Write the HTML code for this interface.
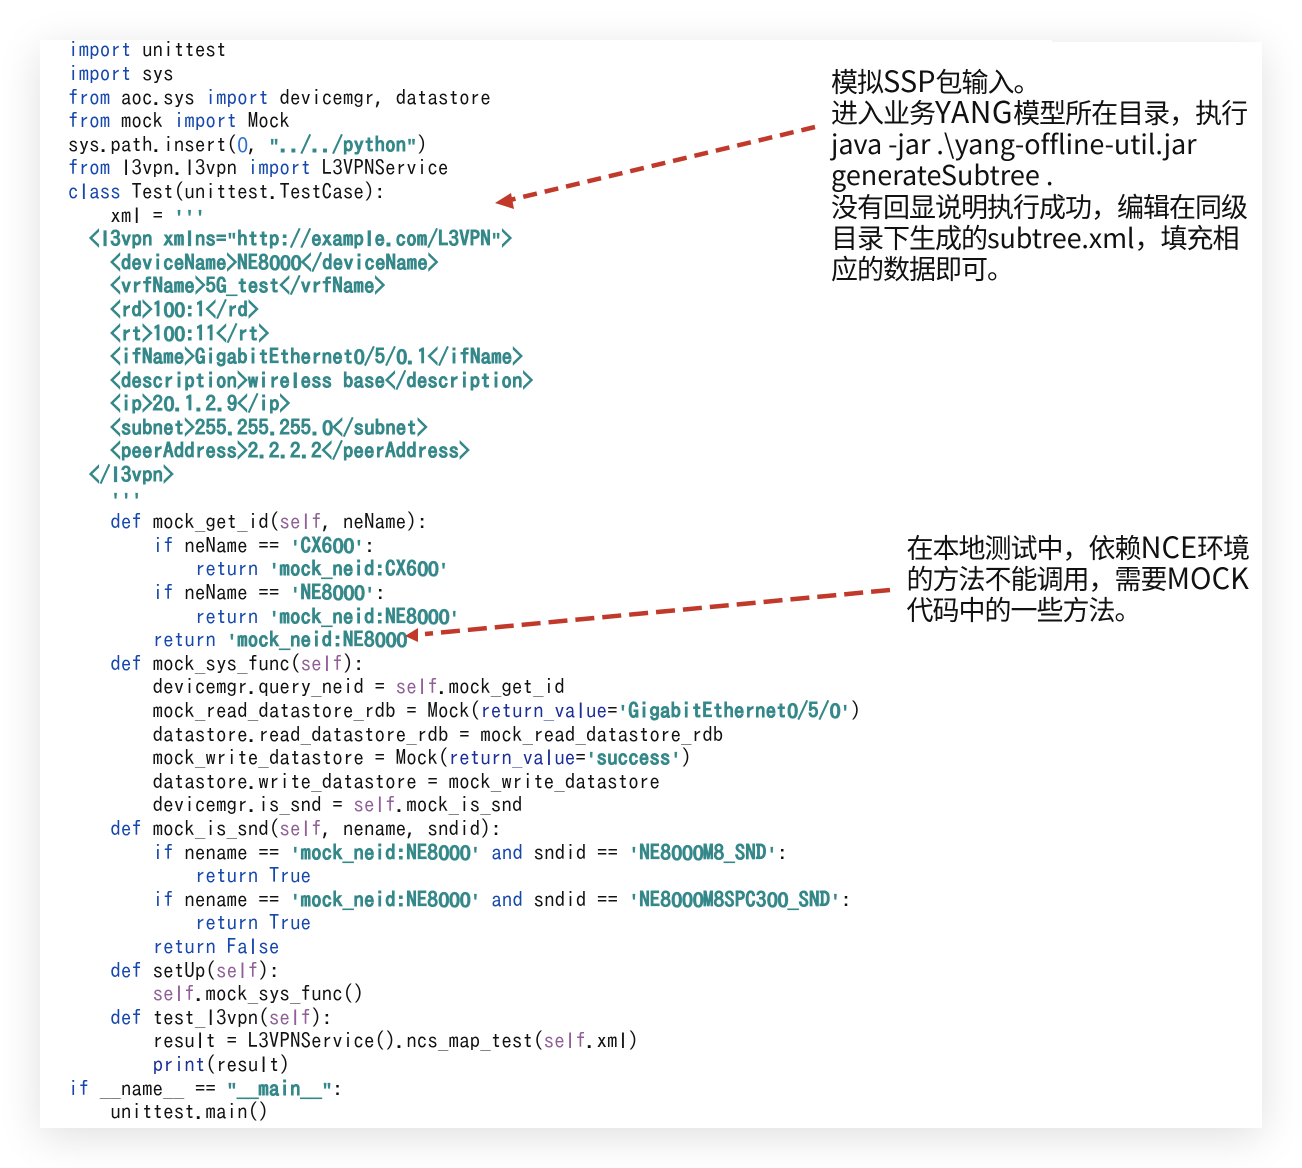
<!DOCTYPE html>
<html><head><meta charset="utf-8"><style>
html,body{margin:0;padding:0;background:#fff}
#p{position:relative;width:1302px;height:1168px;overflow:hidden;background:#fff}
#c{position:absolute;left:40px;top:42px;width:1222px;height:1086px;background:#fff;box-shadow:0 8px 40px rgba(0,0,0,.13)}
#c2{position:absolute;left:40px;top:40px;width:1012px;height:10px;background:#fff}
pre{position:absolute;left:68px;top:38.4px;margin:0;font:21px/23.6px "IPAGothic","Liberation Mono",monospace;color:#111;letter-spacing:.07px;white-space:pre}
pre i{font-style:normal;font-family:"Noto Sans CJK SC",sans-serif;font-size:20px;line-height:0;letter-spacing:-.53px}
.s i{letter-spacing:-1.1px}
pre b{font-weight:inherit;font-family:"Liberation Sans",sans-serif;font-size:21px;line-height:0;letter-spacing:0;padding:0 2.95px}
.s b{padding:0 2.37px}
pre u{text-decoration:none;font-family:"Liberation Mono",monospace;font-size:17.6px;line-height:0;letter-spacing:0}
.k{color:#1547ad}.p{color:#1a2f9a}.s{color:#35888a;font-weight:bold;-webkit-text-stroke:.3px #35888a}.f{color:#8f5f96}.n{color:#2a6fd0}
.t{position:absolute;font:27px/31px "Noto Sans CJK SC","Liberation Sans",sans-serif;color:#111;white-space:nowrap;letter-spacing:-1px}
.t span{line-height:0;font-size:29px;letter-spacing:0}
svg{position:absolute;left:0;top:0}
</style></head><body><div id="p"><div id="c"></div><div id="c2"></div>
<pre><span class="k">import</span> unittest
<span class="k">import</span> sys
<span class="k">from</span> aoc.sys <span class="k">import</span> devicemgr, datastore
<span class="k">from</span> mock <span class="k">import</span> Mock
sys.path.insert(<span class="n"><i>0</i></span>, <span class="s"><u>"</u>../../python<u>"</u></span>)
<span class="k">from</span> <b>l</b>3vpn.<b>l</b>3vpn <span class="k">import</span> L3VPNService
<span class="k">c<b>l</b>ass</span> Test(unittest.TestCase):
    xm<b>l</b> = <span class="s"><u>'''</u></span>
  <span class="s">&lt;<b>l</b>3vpn xm<b>l</b>ns=<u>"</u>http://examp<b>l</b>e.com/L3VPN<u>"</u>&gt;</span>
    <span class="s">&lt;deviceName&gt;NE8<i>000</i>&lt;/deviceName&gt;</span>
    <span class="s">&lt;vrfName&gt;5G_test&lt;/vrfName&gt;</span>
    <span class="s">&lt;rd&gt;1<i>00</i>:1&lt;/rd&gt;</span>
    <span class="s">&lt;rt&gt;1<i>00</i>:11&lt;/rt&gt;</span>
    <span class="s">&lt;ifName&gt;GigabitEthernet<i>0</i>/5/<i>0</i>.1&lt;/ifName&gt;</span>
    <span class="s">&lt;description&gt;wire<b>l</b>ess base&lt;/description&gt;</span>
    <span class="s">&lt;ip&gt;2<i>0</i>.1.2.9&lt;/ip&gt;</span>
    <span class="s">&lt;subnet&gt;255.255.255.<i>0</i>&lt;/subnet&gt;</span>
    <span class="s">&lt;peerAddress&gt;2.2.2.2&lt;/peerAddress&gt;</span>
  <span class="s">&lt;/<b>l</b>3vpn&gt;</span>
    <span class="s"><u>'''</u></span>
    <span class="k">def</span> mock_get_id(<span class="f">se<b>l</b>f</span>, neName):
        <span class="k">if</span> neName == <span class="s"><u>'</u>CX6<i>00</i><u>'</u></span>:
            <span class="k">return</span> <span class="s"><u>'</u>mock_neid:CX6<i>00</i><u>'</u></span>
        <span class="k">if</span> neName == <span class="s"><u>'</u>NE8<i>000</i><u>'</u></span>:
            <span class="k">return</span> <span class="s"><u>'</u>mock_neid:NE8<i>000</i><u>'</u></span>
        <span class="k">return</span> <span class="s"><u>'</u>mock_neid:NE8<i>000</i></span>
    <span class="k">def</span> mock_sys_func(<span class="f">se<b>l</b>f</span>):
        devicemgr.query_neid = <span class="f">se<b>l</b>f</span>.mock_get_id
        mock_read_datastore_rdb = Mock(<span class="p">return_va<b>l</b>ue</span>=<span class="s"><u>'</u>GigabitEthernet<i>0</i>/5/<i>0</i><u>'</u></span>)
        datastore.read_datastore_rdb = mock_read_datastore_rdb
        mock_write_datastore = Mock(<span class="p">return_va<b>l</b>ue</span>=<span class="s"><u>'</u>success<u>'</u></span>)
        datastore.write_datastore = mock_write_datastore
        devicemgr.is_snd = <span class="f">se<b>l</b>f</span>.mock_is_snd
    <span class="k">def</span> mock_is_snd(<span class="f">se<b>l</b>f</span>, nename, sndid):
        <span class="k">if</span> nename == <span class="s"><u>'</u>mock_neid:NE8<i>000</i><u>'</u></span> <span class="k">and</span> sndid == <span class="s"><u>'</u>NE8<i>000</i>M8_SND<u>'</u></span>:
            <span class="k">return True</span>
        <span class="k">if</span> nename == <span class="s"><u>'</u>mock_neid:NE8<i>000</i><u>'</u></span> <span class="k">and</span> sndid == <span class="s"><u>'</u>NE8<i>000</i>M8SPC3<i>00</i>_SND<u>'</u></span>:
            <span class="k">return True</span>
        <span class="k">return Fa<b>l</b>se</span>
    <span class="k">def</span> setUp(<span class="f">se<b>l</b>f</span>):
        <span class="f">se<b>l</b>f</span>.mock_sys_func()
    <span class="k">def</span> test_<b>l</b>3vpn(<span class="f">se<b>l</b>f</span>):
        resu<b>l</b>t = L3VPNService().ncs_map_test(<span class="f">se<b>l</b>f</span>.xm<b>l</b>)
        <span class="p">print</span>(resu<b>l</b>t)
<span class="k">if</span> __name__ == <span class="s"><u>"</u>__main__<u>"</u></span>:
    unittest.main()</pre>
<div class="t" style="left:831px;top:65px">模拟<span>SSP</span>包输入。</div>
<div class="t" style="left:831px;top:96px">进入业务<span style="font-size:30px;letter-spacing:.5px">YANG</span>模型所在目录，执行</div>
<div class="t" style="left:831px;top:127px;letter-spacing:-.05px">java -jar .\yang-offline-util.jar</div>
<div class="t" style="left:831px;top:158px;letter-spacing:0">generateSubtree .</div>
<div class="t" style="left:831px;top:190px">没有回显说明执行成功，编辑在同级</div>
<div class="t" style="left:831px;top:221px">目录下生成的<span style="font-size:27px;letter-spacing:-.15px">subtree.xml</span>，填充相</div>
<div class="t" style="left:831px;top:252px">应的数据即可。</div>
<div class="t" style="left:906.5px;top:531px">在本地测试中，依赖<span>NCE</span>环境</div>
<div class="t" style="left:906.5px;top:562px">的方法不能调用，需要<span>MOCK</span></div>
<div class="t" style="left:906.5px;top:593px">代码中的一些方法。</div>
<svg width="1302" height="1168" viewBox="0 0 1302 1168">
<line x1="815" y1="127" x2="510" y2="200" stroke="#c0392b" stroke-width="4.5" stroke-dasharray="14 8"/>
<polygon points="495,203 511,193 514,209" fill="#c0392b"/>
<line x1="890" y1="590" x2="425" y2="634" stroke="#c0392b" stroke-width="4.5" stroke-dasharray="19 8"/>
<polygon points="405,636 418,628 418,642" fill="#c0392b"/>
</svg>
</div></body></html>
